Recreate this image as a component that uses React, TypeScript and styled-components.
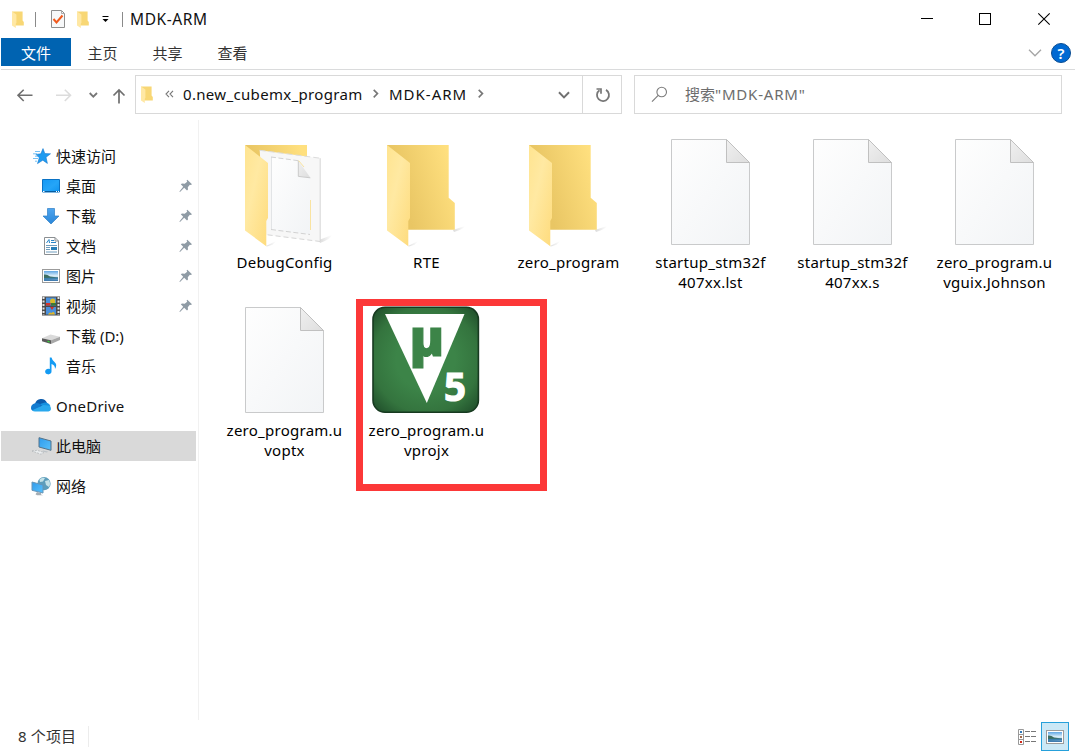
import React from "react";
import styled, { createGlobalStyle, css } from "styled-components";

const GlobalStyle = createGlobalStyle`
  * { box-sizing: border-box; }
  html, body { margin: 0; padding: 0; background: #fff; }
  body {
    font-family: "Noto Sans", "Noto Sans CJK SC", sans-serif;
    font-size: 15px;
    color: #111;
  }
  svg { display: block; flex: none; overflow: visible; }
`;

const Window = styled.div`
  display: flex;
  flex-direction: column;
  width: 1075px;
  height: 752px;
  padding-left: 1px;
  background: #fff;
  overflow: hidden;
`;

const TitleBar = styled.header`
  display: flex;
  align-items: center;
  height: 38px;
  flex: none;
  padding: 0 2px 0 10px;
`;

const TitleDivider = styled.i<{ $left: number; $right: number }>`
  width: 1px;
  height: 15px;
  margin-left: ${(p) => p.$left}px;
  margin-right: ${(p) => p.$right}px;
  background: #8a8a8a;
`;

const QuickButton = styled.span<{ $gap: number }>`
  display: flex;
  margin-left: ${(p) => p.$gap}px;
`;

const WindowTitle = styled.h1`
  margin: 0;
  flex: 1;
  font-size: 15.5px;
  font-weight: 400;
  line-height: 38px;
  letter-spacing: 0.6px;
`;

const WindowButton = styled.button`
  display: grid;
  place-items: center;
  width: 58.5px;
  height: 38px;
  padding: 0;
  border: 0;
  background: none;
`;

const RibbonTabs = styled.nav`
  display: flex;
  height: 32px;
  flex: none;
  border-bottom: 1px solid #dadbdc;
`;

const RibbonTab = styled.a<{ $primary?: boolean }>`
  width: 65px;
  height: 28px;
  line-height: 30px;
  text-align: center;
  color: #333;
  ${(p) =>
    p.$primary &&
    css`
      width: 70px;
      margin-right: -1px;
      background: #0063b1;
      color: #fff;
    `}
`;

const RibbonTools = styled.div`
  display: flex;
  align-items: center;
  gap: 9px;
  margin-left: auto;
  padding-right: 4px;
  height: 30px;
`;

const HelpBadge = styled.span`
  display: grid;
  place-items: center;
  width: 20px;
  height: 20px;
  border: 1px solid #0a4d92;
  border-radius: 50%;
  background: #0069d2;
  color: #fff;
  font-size: 15px;
  font-weight: 600;
  line-height: 18px;
`;

const NavigationBar = styled.div`
  display: flex;
  height: 44px;
  flex: none;
  padding-top: 5px;
`;

const HistoryButtons = styled.div`
  width: 134px;
  height: 39px;
`;

const AddressBox = styled.div`
  display: flex;
  align-items: center;
  width: 487px;
  height: 39px;
  border: 1px solid #d9d9d9;
  padding-left: 4px;
`;

const Crumb = styled.span<{ $spacing: number; $left: number; $width: number }>`
  margin-left: ${(p) => p.$left}px;
  width: ${(p) => p.$width}px;
  padding-bottom: 2px;
  white-space: nowrap;
  letter-spacing: ${(p) => p.$spacing}px;
`;

const AddressTools = styled.div`
  display: flex;
  align-items: center;
  height: 37px;
  margin-left: auto;
`;

const RefreshButton = styled.span`
  display: grid;
  place-items: center;
  width: 39px;
  height: 37px;
  margin-left: 12px;
  padding-left: 2px;
  border-left: 1px solid #d9d9d9;
`;

const SearchBox = styled.div`
  display: flex;
  align-items: center;
  width: 428px;
  height: 39px;
  margin-left: 12px;
  padding-left: 16px;
  border: 1px solid #d9d9d9;
  color: #6d6d6d;
`;

const SearchText = styled.span`
  margin-left: 17px;
  padding-bottom: 2px;
`;

const SearchTerm = styled.span`
  letter-spacing: 0.8px;
`;

const Body = styled.main`
  display: flex;
  height: 606px;
  flex: none;
`;

const Sidebar = styled.aside`
  width: 198px;
  margin-top: 6px;
  padding-top: 21px;
  border-right: 1px solid #f1f1f1;
`;

const TreeGroup = styled.div`
  margin-bottom: 10px;
`;

const TreeRow = styled.div<{ $indent?: boolean; $selected?: boolean }>`
  display: flex;
  align-items: center;
  width: 195px;
  height: 30px;
  padding-left: ${(p) => (p.$indent ? 40 : 30)}px;
  padding-right: 3px;
  background: ${(p) => (p.$selected ? "#d9d9d9" : "transparent")};
`;

const TreeLabel = styled.span<{ $spacing?: number }>`
  margin-left: 5px;
  flex: 1;
  line-height: 30px;
  white-space: nowrap;
  letter-spacing: ${(p) => p.$spacing ?? 0}px;
`;

const Files = styled.section`
  position: relative;
  display: grid;
  grid-template-columns: repeat(6, 142px);
  grid-auto-rows: 168px;
  align-content: start;
  padding: 19px 0 0 14px;
  flex: 1;
`;

const FileTile = styled.figure`
  margin: 0;
  width: 142px;
`;

const FileName = styled.figcaption`
  margin-top: -1px;
  padding-left: 1px;
  font-size: 15px;
  line-height: 20px;
  text-align: center;
  white-space: pre-line;
  letter-spacing: 0.26px;
  color: #000;
`;

const Highlight = styled.div`
  position: absolute;
  left: 157px;
  top: 185px;
  width: 191px;
  height: 192px;
  border: 7px solid #fc3838;
`;

const StatusBar = styled.footer`
  display: flex;
  align-items: center;
  height: 32px;
  flex: none;
  padding: 1px 6px 0 17px;
  color: #333;
`;

const ItemCount = styled.span`
  width: 71px;
  padding-bottom: 1px;
  line-height: 20px;
  letter-spacing: 0.15px;
  border-right: 1px solid #ececec;
`;

const ViewButtons = styled.div`
  display: flex;
  align-items: center;
  gap: 5px;
  margin-left: auto;
`;

const ViewButton = styled.span`
  display: grid;
  place-items: center;
  width: 28px;
  height: 29px;
  border: 1px solid #26a0da;
  background: #cbe8f6;
`;

const GradientSheet = styled.svg`
  position: absolute;
`;

const Gradients = () => (
  <GradientSheet width="0" height="0">
    <defs>
      <linearGradient id="flap" x1="0" y1="0" x2="1" y2="1">
        <stop offset="0" stopColor="#ffe490" />
        <stop offset=".4" stopColor="#ffe9a2" />
        <stop offset="1" stopColor="#fedb7c" />
      </linearGradient>
      <linearGradient id="back" x1="0" y1=".7" x2="1" y2=".35">
        <stop offset=".25" stopColor="#e9c664" />
        <stop offset="1" stopColor="#ffe07f" />
      </linearGradient>
      <linearGradient id="paper" x1="0" y1="0" x2="1" y2="1">
        <stop offset="0" stopColor="#fefefe" />
        <stop offset="1" stopColor="#f2f4f6" />
      </linearGradient>
      <linearGradient id="fold" x1="0" y1="0" x2="1" y2="1">
        <stop offset="0" stopColor="#f0f0f0" />
        <stop offset="1" stopColor="#dedede" />
      </linearGradient>
      <linearGradient id="shadow" x1="0" y1="0" x2="1" y2="0">
        <stop offset="0" stopColor="#bbb" />
        <stop offset="1" stopColor="#fff" />
      </linearGradient>
      <radialGradient id="green" cx=".5" cy=".5" r=".7">
        <stop offset=".4" stopColor="#3c8448" />
        <stop offset=".72" stopColor="#34743e" />
        <stop offset="1" stopColor="#1d4a28" />
      </radialGradient>
      <linearGradient id="sky" x1="0" y1="0" x2="0" y2="1">
        <stop offset="0" stopColor="#5fa6e4" />
        <stop offset=".5" stopColor="#e2f2fb" />
        <stop offset="1" stopColor="#2f6fa8" />
      </linearGradient>
      <linearGradient id="screen" x1="0" y1="0" x2="1" y2="1">
        <stop offset="0" stopColor="#1398f4" />
        <stop offset=".55" stopColor="#25a5f8" />
        <stop offset="1" stopColor="#0e93f0" />
      </linearGradient>
      <linearGradient id="monitor" x1="0" y1="0" x2="1" y2="1">
        <stop offset="0" stopColor="#2f9bec" />
        <stop offset="1" stopColor="#59c1fb" />
      </linearGradient>
      <linearGradient id="arrow" x1="0" y1="0" x2="0" y2="1">
        <stop offset="0" stopColor="#4ea5ef" />
        <stop offset="1" stopColor="#2a86d8" />
      </linearGradient>
    </defs>
  </GradientSheet>
);

const MiniFolder = () => (
  <svg width="14" height="17" viewBox="0 0 14 17">
    <path d="M1 .6H11.6V9.5L12.8 11V14.6H4Z" fill="#f8d775" />
    <path d="M1 .6L5.4 3.6V12L4.8 12.6V17L1 14.6Z" fill="#ffe8a4" />
  </svg>
);

const PropertiesIcon = () => (
  <svg width="14" height="18" viewBox="0 0 14 18">
    <path d="M.5.5H10.5L13.5 3.5V17.5H.5Z" fill="#f7f8f9" stroke="#8e8e8e" />
    <path d="M10.5.5V3.5H13.5" fill="none" stroke="#aaa" />
    <path d="M2.5 9L5.5 12.5L11.5 5.5" fill="none" stroke="#f05a1e" strokeWidth="2" />
  </svg>
);

const FolderBody = () => (
  <>
    <path d="M98 97L110 93Q109 96 99 99Z" fill="url(#shadow)" opacity=".55" />
    <path d="M53 113L63 108Q61 112 54 113.5Z" fill="url(#shadow)" opacity=".5" />
    <path d="M32 12H93.7V64.8L99.8 70V96.7H53L32 60Z" fill="url(#back)" />
  </>
);

const FolderFlap = () => (
  <path d="M32 12L55 30V85L53.3 88V113.2L32 97.5Z" fill="url(#flap)" />
);

const FolderIcon = () => (
  <svg width="142" height="120" viewBox="0 0 142 120">
    <FolderBody />
    <FolderFlap />
  </svg>
);

const FilledFolderIcon = () => (
  <svg width="142" height="120" viewBox="0 0 142 120">
    <path d="M106 107L119 102Q118 106 107 110Z" fill="url(#shadow)" opacity=".55" />
    <path d="M53 113L63 108Q61 112 54 113.5Z" fill="url(#shadow)" opacity=".5" />
    <path d="M32 12H94V60H54Z" fill="url(#back)" />
    <path d="M46.7 17.3L107.2 25.2V108.5L52 101.5Z" fill="#f7f7f7" />
    <path d="M46.7 17.3L107.2 25.2" stroke="#dcdcdc" strokeDasharray="6 3" fill="none" />
    <path d="M107.2 25.2V108.3" stroke="#d6d6d6" fill="none" />
    <path d="M107.2 108.5L52 101.5" stroke="#d6d6d6" strokeDasharray="5 3" fill="none" />
    <path d="M58 24L85.3 27.7L97 44V101.5L58 96.5Z" fill="url(#paper)" />
    <path d="M58.5 97V24" stroke="#e2e4e6" fill="none" />
    <path d="M58 24L85.3 27.7M58 96.5L97 101.5" stroke="#d2d2d2" strokeDasharray="5 2.5" fill="none" />
    <path d="M85.3 27.7V43.2L97.3 44.6Z" fill="url(#fold)" />
    <path d="M85.3 28V43.4L97.3 44.8" stroke="#cacaca" fill="none" />
    <path d="M97.5 67V97M85.5 27.5L91 34" stroke="#f9e3a0" fill="none" />
    <FolderFlap />
  </svg>
);

const PageIcon = () => (
  <svg width="142" height="120" viewBox="0 0 142 120">
    <path d="M32.5 6.5H87.5L110.5 29.5V111.5H32.5Z" fill="url(#paper)" stroke="#c9cacb" />
    <path d="M87.5 6.5L110.5 29.5H87.5Z" fill="url(#fold)" stroke="#c0c0c0" />
  </svg>
);

const KeilIcon = () => (
  <svg width="142" height="120" viewBox="0 0 142 120">
    <rect x="18" y="6.3" width="105.4" height="105" rx="12" fill="url(#green)" stroke="#173a20" strokeWidth="1.6" />
    <path d="M30 13H109.5L71.8 102Z" fill="#fff" />
    <text x="54.8" y="54.8" fontFamily="Open Sans, sans-serif" fontWeight="800" fontSize="51" fill="#3c8448" stroke="#3c8448" strokeWidth="1.2">µ</text>
    <text x="89" y="99.7" fontFamily="Open Sans, sans-serif" fontWeight="700" fontSize="38.5" fill="#fff" stroke="#fff" strokeWidth="1.1">5</text>
  </svg>
);

const Pin = () => (
  <svg width="14" height="14" viewBox="0 0 14 14" fill="#8f9ba5">
    <path d="M8.3.8L13 5.2L11.8 6L10.8 5.7L8.8 8.2L9 10.6L8 11.5L5.2 8.7L1 13L.4 12.6L4.2 7.7L1.8 5.3L3 4.5L5.7 4.8L8.2 2.7L7.6 1.6Z" />
  </svg>
);

const Star = () => (
  <svg width="20" height="18" viewBox="0 0 20 18">
    <path d="M12 1.6L13.8 6.6L19.5 6.8L15 10.3L16.4 16.4L11.8 13.2L6.5 16.6L8.3 10.8L5 7.4L9.8 6.8Z" fill="#1f9bf0" stroke="#1579cf" strokeWidth=".6" />
    <path d="M4 4.5H9M2 6.8H6M4 9.2H7M2 11.5H7M4 14.2H6" stroke="#52b1f2" strokeWidth=".8" />
  </svg>
);

const Desktop = () => (
  <svg width="20" height="18" viewBox="0 0 20 18">
    <path d="M1.5 2.5H18.5V15H1.5Z" fill="url(#screen)" stroke="#0a72c4" />
    <path d="M2 14.5H18" stroke="#075c9e" />
    <path d="M2 14.5H3.5M15 14.5H16M17 14.5H18" stroke="#fff" />
  </svg>
);

const Download = () => (
  <svg width="20" height="18" viewBox="0 0 20 18">
    <path d="M6.5 1.5H13.5V9H18L10 17L2 9H6.5Z" fill="url(#arrow)" stroke="#2d7ec5" strokeWidth=".7" />
  </svg>
);

const Documents = () => (
  <svg width="20" height="18" viewBox="0 0 20 18">
    <path d="M3.5.5H14L17.5 4V17.5H3.5Z" fill="#fff" stroke="#8b8f92" />
    <path d="M14 .5V4H17.5" fill="none" stroke="#8b8f92" />
    <path d="M5.5 6L8 2.5L8.5 6M10 3.5H13M10 5.5H15" stroke="#2a86c8" fill="none" />
    <path d="M5 8.5H16M5 10.5H9M5 12.5H9M5 15H16" stroke="#6e9cbd" />
    <path d="M10 10H16V13H10Z" fill="#287eb8" />
  </svg>
);

const Landscape = () => (
  <svg width="18" height="14" viewBox="0 0 18 14">
    <rect x=".5" y=".5" width="17" height="13" fill="#fff" stroke="#9b9b9b" />
    <rect x="2" y="2" width="14" height="10" fill="url(#sky)" />
    <path d="M2 5.5Q5 5 8 7.5L16 8.5V9.5H2Z" fill="#3c6e62" />
    <path d="M2 9L16 8.5V10L2 11Z" fill="#3c80ae" />
  </svg>
);

const Pictures = () => (
  <svg width="20" height="18" viewBox="-1 -2 20 18">
    <Landscape />
  </svg>
);

const Videos = () => (
  <svg width="20" height="20" viewBox="0 0 20 20">
    <rect x="1" y=".5" width="18" height="19" fill="#4b4b4b" />
    <path d="M2.5 1V19M17.5 1V19" stroke="#e4e4e4" strokeWidth="2" strokeDasharray="2 1.5" />
    <path d="M5 1.5H15V9.5H5ZM5 11H15V18.5H5Z" fill="#4a90dc" />
    <path d="M5 7H10L9 9.5H5Z" fill="#d8342a" />
    <circle cx="11.7" cy="5.2" r="2.6" fill="#d9ba2c" />
    <path d="M10 7H15V9.5H10Z" fill="#3c7a37" />
    <path d="M9 11H13L11 14Z" fill="#cf3327" />
    <path d="M7 18.5Q8.5 15.5 10.5 17Q13 14.5 14 18.5Z" fill="#e0b62a" />
  </svg>
);

const Drive = () => (
  <svg width="20" height="18" viewBox="0 0 20 18">
    <path d="M1 11.3L9.5 7.5L19 9.8L10 13.2Z" fill="#dadada" />
    <path d="M1 11.3L10 13.2V17L1 14.2Z" fill="#5a5a5a" />
    <path d="M10 13.2L19 9.8V13L10 17Z" fill="#a8a8a8" />
    <path d="M6.5 13.7L8.5 14.1V15.5L6.5 15Z" fill="#35d13b" />
  </svg>
);

const Music = () => (
  <svg width="20" height="18" viewBox="0 0 20 18">
    <path d="M8.8.5H10.5Q11.2 3.4 13.5 5Q16.7 7.6 14 12Q14.2 8 10.5 7V14.3A3.2 2.8 0 1 1 8.8 12.1Z" fill="#149bf3" />
  </svg>
);

const OneDrive = () => (
  <svg width="20" height="18" viewBox="0 0 20 18">
    <path d="M4 7A6.3 6.3 0 0 1 16 6L8 13Z" fill="#0b5cad" />
    <path d="M0 11Q0 7.2 4 6.2Q8 5.5 10 8L6 14H3Q0 13.6 0 11Z" fill="#127bd0" />
    <path d="M9 7L14 5.5Q18 5.5 19.3 9L12 10Z" fill="#1490df" />
    <path d="M1.3 13.3L12.5 8L19 8.8Q21.5 13.5 17.5 14.5H4Q2 14.5 1.3 13.3Z" fill="#29a8ed" />
  </svg>
);

const ThisPC = () => (
  <svg width="20" height="18" viewBox="0 0 20 18">
    <path d="M8 .7L20 4V13.3L8 10Z" fill="url(#monitor)" stroke="#54738a" strokeWidth="1" />
    <path d="M1 14L6 13.3L13 15.5L10 17.2Z" fill="#eceff1" stroke="#a4a9ad" strokeWidth=".6" strokeDasharray="2 1" />
    <path d="M12 13.5L17 14.5L16 15.5L11 14.5Z" fill="#bcc2c7" />
  </svg>
);

const Network = () => (
  <svg width="20" height="20" viewBox="0 0 20 20">
    <circle cx="13" cy="7.7" r="6.6" fill="#5d9dbb" />
    <path d="M8.5 3.5Q11 1 14 2L12 5.5L9 6ZM14 5L18 4Q20 8 18 11L15 9Z" fill="#c4e2e8" />
    <path d="M1 6L12 9V17L1 14.3Z" fill="url(#monitor)" stroke="#6595b8" />
    <path d="M6 16L10 17V18.5L12 19.2H6L4.5 18.3Z" fill="#a4adb4" />
  </svg>
);

const Chevron = ({ dir, size = 8, color = "#777" }: { dir: "down" | "right"; size?: number; color?: string }) =>
  dir === "down" ? (
    <svg width={size} height={size} viewBox="0 0 10 10">
      <path d="M.8 2.7L5 7L9.2 2.7" fill="none" stroke={color} strokeWidth="1.6" />
    </svg>
  ) : (
    <svg width={size} height={size + 2} viewBox="0 1 10 12">
      <path d="M3 1.8L7.2 6L3 10.2" fill="none" stroke={color} strokeWidth="1.8" />
    </svg>
  );

const HistoryArrows = () => (
  <svg width="134" height="39" viewBox="1 75 134 39" fill="none">
    <path d="M32.5 95.3H18M23.7 89.7L18 95.3L23.7 101" stroke="#6f6f6f" strokeWidth="1.6" />
    <path d="M56 95.3H70.5M64.8 89.7L70.5 95.3L64.8 101" stroke="#dcdcdc" strokeWidth="1.6" />
    <path d="M89.7 93L93.3 96.7L97 93" stroke="#777" strokeWidth="1.8" />
    <path d="M119 103.5V90M113.5 95.5L119 90L124.5 95.5" stroke="#6f6f6f" strokeWidth="1.7" />
  </svg>
);

const quickAccess = [
  { icon: <Desktop />, label: "桌面", pinned: true },
  { icon: <Download />, label: "下载", pinned: true },
  { icon: <Documents />, label: "文档", pinned: true },
  { icon: <Pictures />, label: "图片", pinned: true },
  { icon: <Videos />, label: "视频", pinned: true },
  { icon: <Drive />, label: "下载 (D:)", pinned: false },
  { icon: <Music />, label: "音乐", pinned: false },
];

const files = [
  { icon: <FilledFolderIcon />, name: "DebugConfig" },
  { icon: <FolderIcon />, name: "RTE" },
  { icon: <FolderIcon />, name: "zero_program" },
  { icon: <PageIcon />, name: "startup_stm32f\n407xx.lst" },
  { icon: <PageIcon />, name: "startup_stm32f\n407xx.s" },
  { icon: <PageIcon />, name: "zero_program.u\nvguix.Johnson" },
  { icon: <PageIcon />, name: "zero_program.u\nvoptx" },
  { icon: <KeilIcon />, name: "zero_program.u\nvprojx" },
];

export default function App() {
  return (
    <Window>
      <GlobalStyle />
      <Gradients />
      <TitleBar>
        <MiniFolder />
        <TitleDivider $left={10} $right={0} />
        <QuickButton $gap={15}><PropertiesIcon /></QuickButton>
        <QuickButton $gap={11}><MiniFolder /></QuickButton>
        <QuickButton $gap={12}>
          <svg width="7" height="6" viewBox="0 1 7 6">
            <path d="M.5 1.5H6.5" stroke="#000" />
            <path d="M.5 4H6.5L3.5 7Z" fill="#000" />
          </svg>
        </QuickButton>
        <TitleDivider $left={13} $right={7} />
        <WindowTitle>MDK-ARM</WindowTitle>
        <WindowButton>
          <svg width="12" height="12"><path d="M0 5.5H12" stroke="#000" /></svg>
        </WindowButton>
        <WindowButton>
          <svg width="12" height="12"><rect x=".5" y=".5" width="11" height="11" fill="none" stroke="#000" /></svg>
        </WindowButton>
        <WindowButton>
          <svg width="12" height="12"><path d="M.3.3L11.7 11.7M11.7.3L.3 11.7" stroke="#000" strokeWidth="1.1" /></svg>
        </WindowButton>
      </TitleBar>

      <RibbonTabs>
        <RibbonTab $primary>文件</RibbonTab>
        <RibbonTab>主页</RibbonTab>
        <RibbonTab>共享</RibbonTab>
        <RibbonTab>查看</RibbonTab>
        <RibbonTools>
          <svg width="14" height="8"><path d="M1 .8L7 6.8L13 .8" fill="none" stroke="#a5a5a5" strokeWidth="1.3" /></svg>
          <HelpBadge>?</HelpBadge>
        </RibbonTools>
      </RibbonTabs>

      <NavigationBar>
        <HistoryButtons><HistoryArrows /></HistoryButtons>
        <AddressBox>
          <MiniFolder />
          <Crumb $left={11} $width={18} $spacing={0}>
            <svg width="9" height="8" viewBox="0 0 9 8"><path d="M4 .8L1 4L4 7.2M8 .8L5 4L8 7.2" fill="none" stroke="#777" strokeWidth="1.1" /></svg>
          </Crumb>
          <Crumb $left={0} $width={188} $spacing={0.33}>0.new_cubemx_program</Crumb>
          <Chevron dir="right" size={9} />
          <Crumb $left={9} $width={87} $spacing={1}>MDK-ARM</Crumb>
          <Chevron dir="right" size={9} />
          <AddressTools>
            <Chevron dir="down" size={12} color="#707070" />
            <RefreshButton>
              <svg width="16" height="16" viewBox="0 0 16 16" fill="none">
                <path d="M11 2.9A6 6 0 1 1 4.5 3.2" stroke="#777" strokeWidth="1.8" />
                <path d="M1.5 2H6V6.8" stroke="#777" strokeWidth="1.7" />
              </svg>
            </RefreshButton>
          </AddressTools>
        </AddressBox>
        <SearchBox>
          <svg width="17" height="17" viewBox="0 0 17 17" fill="none" stroke="#7d7d7d">
            <circle cx="10.7" cy="6" r="4.8" strokeWidth="1.1" />
            <path d="M7.2 9.4L1 15.7" strokeWidth="1.2" />
          </svg>
          <SearchText>搜索<SearchTerm>"MDK-ARM"</SearchTerm></SearchText>
        </SearchBox>
      </NavigationBar>

      <Body>
        <Sidebar>
          <TreeGroup>
            <TreeRow><Star /><TreeLabel>快速访问</TreeLabel></TreeRow>
            {quickAccess.map((entry) => (
              <TreeRow key={entry.label} $indent>
                {entry.icon}
                <TreeLabel>{entry.label}</TreeLabel>
                {entry.pinned && <Pin />}
              </TreeRow>
            ))}
          </TreeGroup>
          <TreeGroup><TreeRow><OneDrive /><TreeLabel $spacing={0.25}>OneDrive</TreeLabel></TreeRow></TreeGroup>
          <TreeGroup><TreeRow $selected><ThisPC /><TreeLabel>此电脑</TreeLabel></TreeRow></TreeGroup>
          <TreeGroup><TreeRow><Network /><TreeLabel>网络</TreeLabel></TreeRow></TreeGroup>
        </Sidebar>
        <Files>
          {files.map((file) => (
            <FileTile key={file.name}>
              {file.icon}
              <FileName>{file.name}</FileName>
            </FileTile>
          ))}
          <Highlight />
        </Files>
      </Body>

      <StatusBar>
        <ItemCount>8 个项目</ItemCount>
        <ViewButtons>
          <svg width="18" height="16" viewBox="0 0 18 16">
            <path d="M.5.5H5.5V15.5H.5ZM.5 5.5H5.5M.5 10.5H5.5" fill="#fff" stroke="#999" />
            <path d="M2 3H4" stroke="#3078b8" strokeWidth="2" />
            <path d="M2 8H4" stroke="#a06848" strokeWidth="2" />
            <path d="M2 13H4" stroke="#d02818" strokeWidth="2" />
            <path d="M7 2.5H12M13 2.5H18M7 7.5H12M13 7.5H18M7 12.5H12M13 12.5H18" stroke="#777" />
          </svg>
          <ViewButton><Landscape /></ViewButton>
        </ViewButtons>
      </StatusBar>
    </Window>
  );
}
